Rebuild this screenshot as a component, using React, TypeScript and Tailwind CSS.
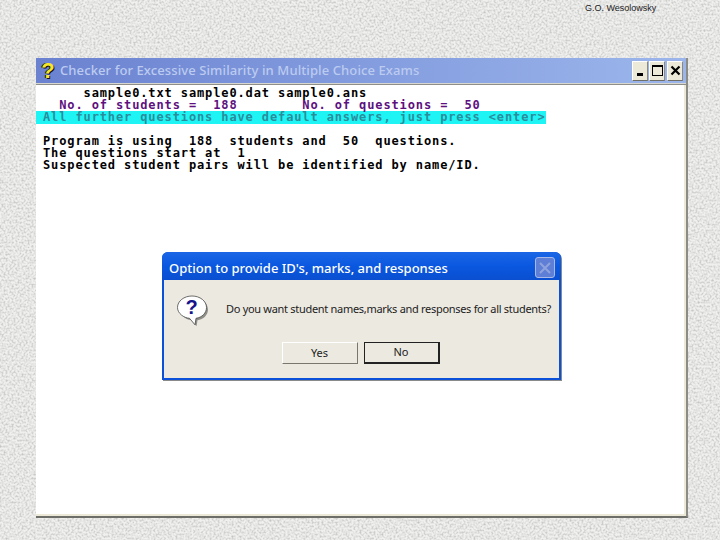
const termFont = "font-['DejaVu_Sans_Mono',monospace] font-bold text-[12px] leading-[12.2px] tracking-[0.88px] whitespace-pre";
const uiFont = "font-['Noto_Sans',sans-serif]";

function Noise() {
  return (
    <svg className="absolute inset-0" width="720" height="540">
      <filter id="paper" x="0" y="0" width="100%" height="100%">
        <feTurbulence type="fractalNoise" baseFrequency="0.5" numOctaves="3" seed="7" />
        <feColorMatrix values="0 0 0 0 0  0 0 0 0 0  0 0 0 0 0  1.9 0 0 0 -0.76" />
      </filter>
      <rect width="720" height="540" fill="#f0f0ee" />
      <rect width="720" height="540" filter="url(#paper)" opacity="0.22" />
    </svg>
  );
}

function CaptionButton({ children }: { children: React.ReactNode }) {
  return (
    <div className="w-[16px] h-[20px] flex items-center justify-center bg-[#ece9d8] border-t border-l border-t-white border-l-white border-r border-b border-r-[#8a8a80] border-b-[#6f6f68]">
      {children}
    </div>
  );
}

function HelpBubble() {
  return (
    <svg width="34" height="32" viewBox="0 0 34 32" className="shrink-0">
      <path d="M18 3c7.500 0 14 5 14 11.500 0 5.500-4.500 10-10.500 10.800l-1 6-5.500-6.300C9 24.500 5 20 5 14.500 5 8 10.500 3 18 3Z" fill="#8f8f8a" />
      <path d="M16 1c8 0 14.500 5 14.500 11.500 0 5.500-4.500 10-10.500 10.800l-1 6.500-5.500-6.500C8 23 1.500 18.500 1.500 12.500 1.500 6 8 1 16 1Z" fill="#fff" stroke="#4a4a4a" strokeWidth="0.8" />
      <text x="15.500" y="19" textAnchor="middle" fontFamily="'Liberation Sans', sans-serif" fontWeight="700" fontSize="20" fill="#14148c">?</text>
    </svg>
  );
}

export default function App() {
  return (
    <div className="relative w-[720px] h-[540px] overflow-hidden bg-[#f0f0ee]">
      <Noise />
      <div className="relative flex flex-col w-full h-full">
        <div className="h-[58px] pl-[585px] pt-[3px] font-['Liberation_Sans',sans-serif] text-[9px] leading-[11px] text-[#222]">
          G.O. Wesolowsky
        </div>
        <div className="ml-[36px] w-[652px] h-[460px] flex flex-col bg-[#ece9d8] border-r-2 border-b-2 border-r-[#8c8c86] border-b-[#6e6e68]">
          <div className="h-[25px] flex items-center bg-gradient-to-r from-[#6b82d0] to-[#9cb6ec]">
            <div className="w-[24px] text-center font-['Liberation_Sans',sans-serif] font-black text-[22px] leading-[24px] text-[#f6e62c] [text-shadow:1px_1px_0_#111,-1px_0_0_#111]">
              ?
            </div>
            <div className={`${uiFont} text-[13px] text-[#bccbf0] font-medium tracking-[0.1px]`}>
              Checker for Excessive Similarity in Multiple Choice Exams
            </div>
            <div className="ml-auto mr-[3px] flex gap-[1px] items-center">
              <CaptionButton>
                <div className="w-[6px] h-[3px] mt-[7px] bg-black" />
              </CaptionButton>
              <CaptionButton>
                <div className="w-[11px] h-[11px] border border-black border-t-2" />
              </CaptionButton>
              <div className="ml-[1px]">
                <CaptionButton>
                  <svg width="11" height="11" viewBox="0 0 11 11">
                    <path d="M1.500 1.500l8 8M9.500 1.500l-8 8" stroke="#000" strokeWidth="2.200" />
                  </svg>
                </CaptionButton>
              </div>
            </div>
          </div>
          <div className="h-[2px] bg-[#8f8f8a] border-t border-t-[#d8d8d0]" />
          <div className="relative mr-[2px] mb-[2px] flex-1 bg-white pt-[2px] pl-[7px] text-black">
            <div className={termFont}>{"     sample0.txt sample0.dat sample0.ans"}</div>
            <div className={`${termFont} text-[#5d1180]`}>{"  No. of students =  188        No. of questions =  50"}</div>
            <div className={`${termFont} w-fit -ml-[7px] pl-[7px] bg-[#1ff4f4] text-[#2b8d9c]`}>
              {"All further questions have default answers, just press <enter>"}
            </div>
            <div className={`${termFont} mt-[11px]`}>{"Program is using  188  students and  50  questions."}</div>
            <div className={termFont}>{"The questions start at  1"}</div>
            <div className={termFont}>{"Suspected student pairs will be identified by name/ID."}</div>

            <div className="absolute left-[126px] top-[167px] w-[399px] h-[128px] flex flex-col rounded-t-[6px] bg-[#0a50d8] shadow-[1px_1px_0_#8a8a8a]">
              <div className="h-[28px] flex items-center pl-[7px] pr-[6px] rounded-t-[6px] bg-gradient-to-b from-[#1a66e6] via-[#0a58e0] to-[#0a4fd0]">
                <div className={`${uiFont} pt-[5px] text-[13px] font-medium text-white`}>
                  Option to provide ID's, marks, and responses
                </div>
                <div className="ml-auto mt-[3px] w-[20px] h-[21px] rounded-[3px] bg-[#5f7fd6] border border-[#a8b8e8] flex items-center justify-center">
                  <svg width="14" height="14" viewBox="0 0 14 14">
                    <path d="M2 2l10 10M12 2 2 12" stroke="#8fa3de" strokeWidth="2" />
                  </svg>
                </div>
              </div>
              <div className="flex-1 mx-[2px] mb-[2px] bg-[#ece9e0] flex flex-col">
                <div className="h-[62px] flex pt-[15px] pl-[12px]">
                  <HelpBubble />
                  <div className={`${uiFont} ml-[16px] mt-[6px] text-[11px] leading-[16px] text-[#222] tracking-[-0.3px] whitespace-nowrap`}>
                    Do you want student names,marks and responses for all students?
                  </div>
                </div>
                <div className="flex justify-center gap-[6px] pr-[2px]">
                  <div className={`${uiFont} w-[76px] h-[22px] flex items-center justify-center text-[11px] text-[#222] bg-[#ece9e0] border border-t-white border-l-white border-r-[#77776f] border-b-[#77776f]`}>
                    Yes
                  </div>
                  <div className={`${uiFont} w-[76px] h-[22px] flex items-center justify-center text-[11px] text-[#222] bg-[#ece9e0] border border-[#222] border-r-2 border-b-2`}>
                    No
                  </div>
                </div>
              </div>
            </div>
          </div>
        </div>
      </div>
    </div>
  );
}
